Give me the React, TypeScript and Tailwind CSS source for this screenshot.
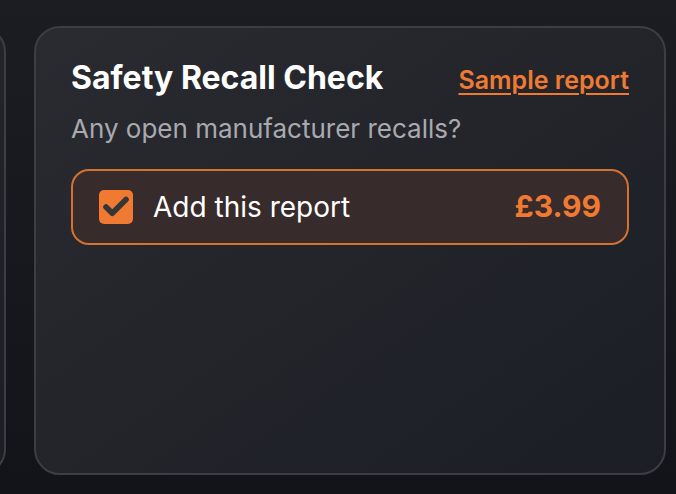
import { Check } from 'lucide-react'

function ReportCard({ ghost = false }: { ghost?: boolean }) {
  return (
    <div
      className={`shrink-0 w-[632px] h-[449px] rounded-[26px] border-2 border-[#3b3e45] bg-gradient-to-br from-[#2a2b30] to-[#1b1e25] px-[35px] pt-[30px] ${ghost ? 'ml-[-626px]' : ''}`}
    >
      {!ghost && (
        <>
          <div className="flex items-baseline justify-between">
            <h2 className="text-[32px] font-bold leading-[40px] text-white">Safety Recall Check</h2>
            <a className="text-[25px] font-semibold text-[#f07a32] underline underline-offset-[4px] decoration-2">
              Sample report
            </a>
          </div>
          <p className="mt-[13px] text-[26px] leading-[32px] text-[#a8aaaf]">Any open manufacturer recalls?</p>

          <label className="mt-[24px] flex h-[76px] items-center rounded-[18px] border-2 border-[#d4722f] bg-[#372b2b] pl-[26px] pr-[26px]">
            <span className="flex h-[34px] w-[34px] items-center justify-center rounded-[5px] bg-[#f07a32]">
              <Check className="h-[30px] w-[30px] text-[#363636]" strokeWidth={4.5} />
            </span>
            <span className="ml-[20px] text-[28px] text-white">Add this report</span>
            <span className="ml-auto text-[30px] font-bold text-[#f07a32]">£3.99</span>
          </label>
        </>
      )}
    </div>
  )
}

export default function App() {
  return (
    <div
      className="h-[494px] w-[676px] overflow-hidden bg-gradient-to-b from-[#1b1d23] to-[#121419] pt-[26px]"
      style={{ fontFamily: 'Inter, "Noto Sans", sans-serif' }}
    >
      <div className="flex gap-[28px]">
        <ReportCard ghost />
        <ReportCard />
      </div>
    </div>
  )
}
